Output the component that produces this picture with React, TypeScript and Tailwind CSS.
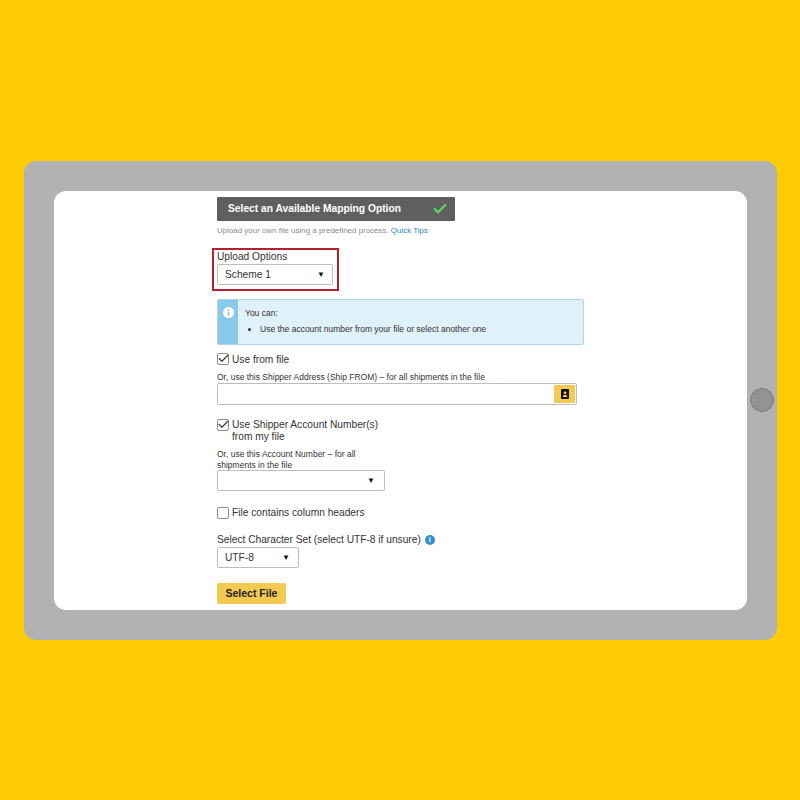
import React from 'react';
import { Check } from 'lucide-react';

const font = "font-['Liberation_Sans',Arial,sans-serif]";

const Caret = () => <span className="text-[8px] leading-none text-[#111]">▼</span>;

const Checkbox = ({ checked }: { checked?: boolean }) => (
  <div className="w-[12px] h-[12px] mt-[1px] shrink-0 rounded-[2px] border border-[#8c8c8c] bg-white relative">
    {checked && <Check className="absolute -left-[1px] -top-[2px] w-[13px] h-[13px] text-[#444]" strokeWidth={2.5} />}
  </div>
);

const App: React.FC = () => {
  return (
    <div className={`w-[800px] h-[800px] bg-[#ffcb05] pt-[161px] pl-[24px] overflow-hidden ${font}`}>
      {/* tablet frame */}
      <div className="relative w-[753px] h-[479px] bg-[#b2b2b2] rounded-[12px] pt-[30px] pl-[30px]">
        <div className="absolute left-[726px] top-[227px] w-[24px] h-[24px] rounded-full bg-[#939393] border border-[#7d7d7d]"></div>

        <div className="w-[693px] h-[419px] bg-white rounded-[12px] pl-[163px] pt-[6px] overflow-hidden">
          <div className="w-[238px] h-[24px] bg-[#5f5f5f] rounded-[1px] flex items-center justify-between pl-[11px] pr-[7px]">
            <span className="text-[10.25px] font-bold text-white">Select an Available Mapping Option</span>
            <Check className="w-[16px] h-[16px] text-[#5fd068]" strokeWidth={3.5} />
          </div>
          <p className="mt-[4px] text-[7.95px] leading-[12px] text-[#8a8a8a]">
            Upload your own file using a predefined process. <span className="text-[#2a8bb8]">Quick Tips</span>
          </p>

          {/* highlighted upload options */}
          <div className="mt-[11px] -ml-[5px] w-[127px] h-[43px] border-[2px] border-[#b5202e] pl-[3px]">
            <div className="text-[10.2px] leading-[14px] text-[#333]">Upload Options</div>
            <div className="w-[116px] h-[21px] border border-[#bdbdbd] rounded-[2px] flex items-center justify-between pl-[7px] pr-[7px]">
              <span className="text-[10.2px] text-[#333]">Scheme 1</span>
              <Caret />
            </div>
          </div>

          <div className="mt-[8px] w-[367px] h-[46px] flex rounded-[2px] border border-[#a9d6ec] bg-[#dff1f9]">
            <div className="w-[20px] bg-[#88c9ea] flex justify-center pt-[7px]">
              <svg width="11" height="11" viewBox="0 0 11 11">
                <circle cx="5.5" cy="5.5" r="5.5" fill="#fff" />
                <rect x="4.7" y="2.2" width="1.6" height="1.6" fill="#88c9ea" />
                <rect x="4.7" y="4.6" width="1.6" height="4.2" fill="#88c9ea" />
              </svg>
            </div>
            <div className="pl-[7px] pt-[7px] text-[8.5px] text-[#333]">
              <div className="leading-[12px]">You can:</div>
              <ul className="mt-[4px] pl-[15px] list-disc leading-[12px]">
                <li>Use the account number from your file or select another one</li>
              </ul>
            </div>
          </div>

          <div className="mt-[7px] flex gap-[3px] items-start">
            <Checkbox checked />
            <span className="mt-[1px] text-[10.2px] leading-[13px] text-[#333]">Use from file</span>
          </div>
          <div className="mt-[6px] text-[8.5px] leading-[11px] text-[#333]">
            Or, use this Shipper Address (Ship FROM) – for all shipments in the file
          </div>
          <div className="w-[360px] h-[22px] border border-[#bdbdbd] rounded-[2px] flex justify-end items-center pr-[1px]">
            <div className="w-[21px] h-[18px] bg-[#f4c94f] rounded-[1px] flex items-center justify-center">
              <svg width="8" height="10" viewBox="0 0 8 10">
                <rect width="8" height="10" rx="1" fill="#111" />
                <circle cx="4" cy="3.8" r="1.4" fill="#f4c94f" />
                <path d="M1.8 8c0-1.600 1-2.300 2.200-2.300S6.200 6.400 6.200 8z" fill="#f4c94f" />
              </svg>
            </div>
          </div>

          <div className="mt-[13px] flex gap-[3px] items-start">
            <Checkbox checked />
            <span className="mt-[1px] w-[160px] text-[10.2px] leading-[11.5px] text-[#333]">Use Shipper Account Number(s) from my file</span>
          </div>
          <div className="mt-[7px] w-[160px] text-[8.5px] leading-[10.5px] text-[#333]">
            Or, use this Account Number – for all shipments in the file
          </div>
          <div className="w-[168px] h-[21px] border border-[#bdbdbd] rounded-[2px] flex justify-end items-center pr-[9px]">
            <Caret />
          </div>

          <div className="mt-[15px] flex gap-[3px] items-start">
            <Checkbox />
            <span className="text-[10.2px] leading-[13px] text-[#333]">File contains column headers</span>
          </div>

          <div className="mt-[14px] flex items-center gap-[4px]">
            <span className="text-[10.2px] leading-[14px] text-[#333]">Select Character Set (select UTF-8 if unsure)</span>
            <div className="w-[10px] h-[10px] rounded-full bg-[#3b8fc8] text-white text-[7px] leading-[10px] font-bold text-center">i</div>
          </div>
          <div className="w-[82px] h-[21px] border border-[#bdbdbd] rounded-[2px] flex items-center justify-between pl-[7px] pr-[8px]">
            <span className="text-[10.2px] text-[#333]">UTF-8</span>
            <Caret />
          </div>

          <div className="mt-[15px] w-[69px] h-[21px] bg-[#f4c94f] rounded-[2px] flex items-center justify-center text-[10.5px] font-bold text-[#222]">
            Select File
          </div>
        </div>
      </div>
    </div>
  );
};

export default App;
